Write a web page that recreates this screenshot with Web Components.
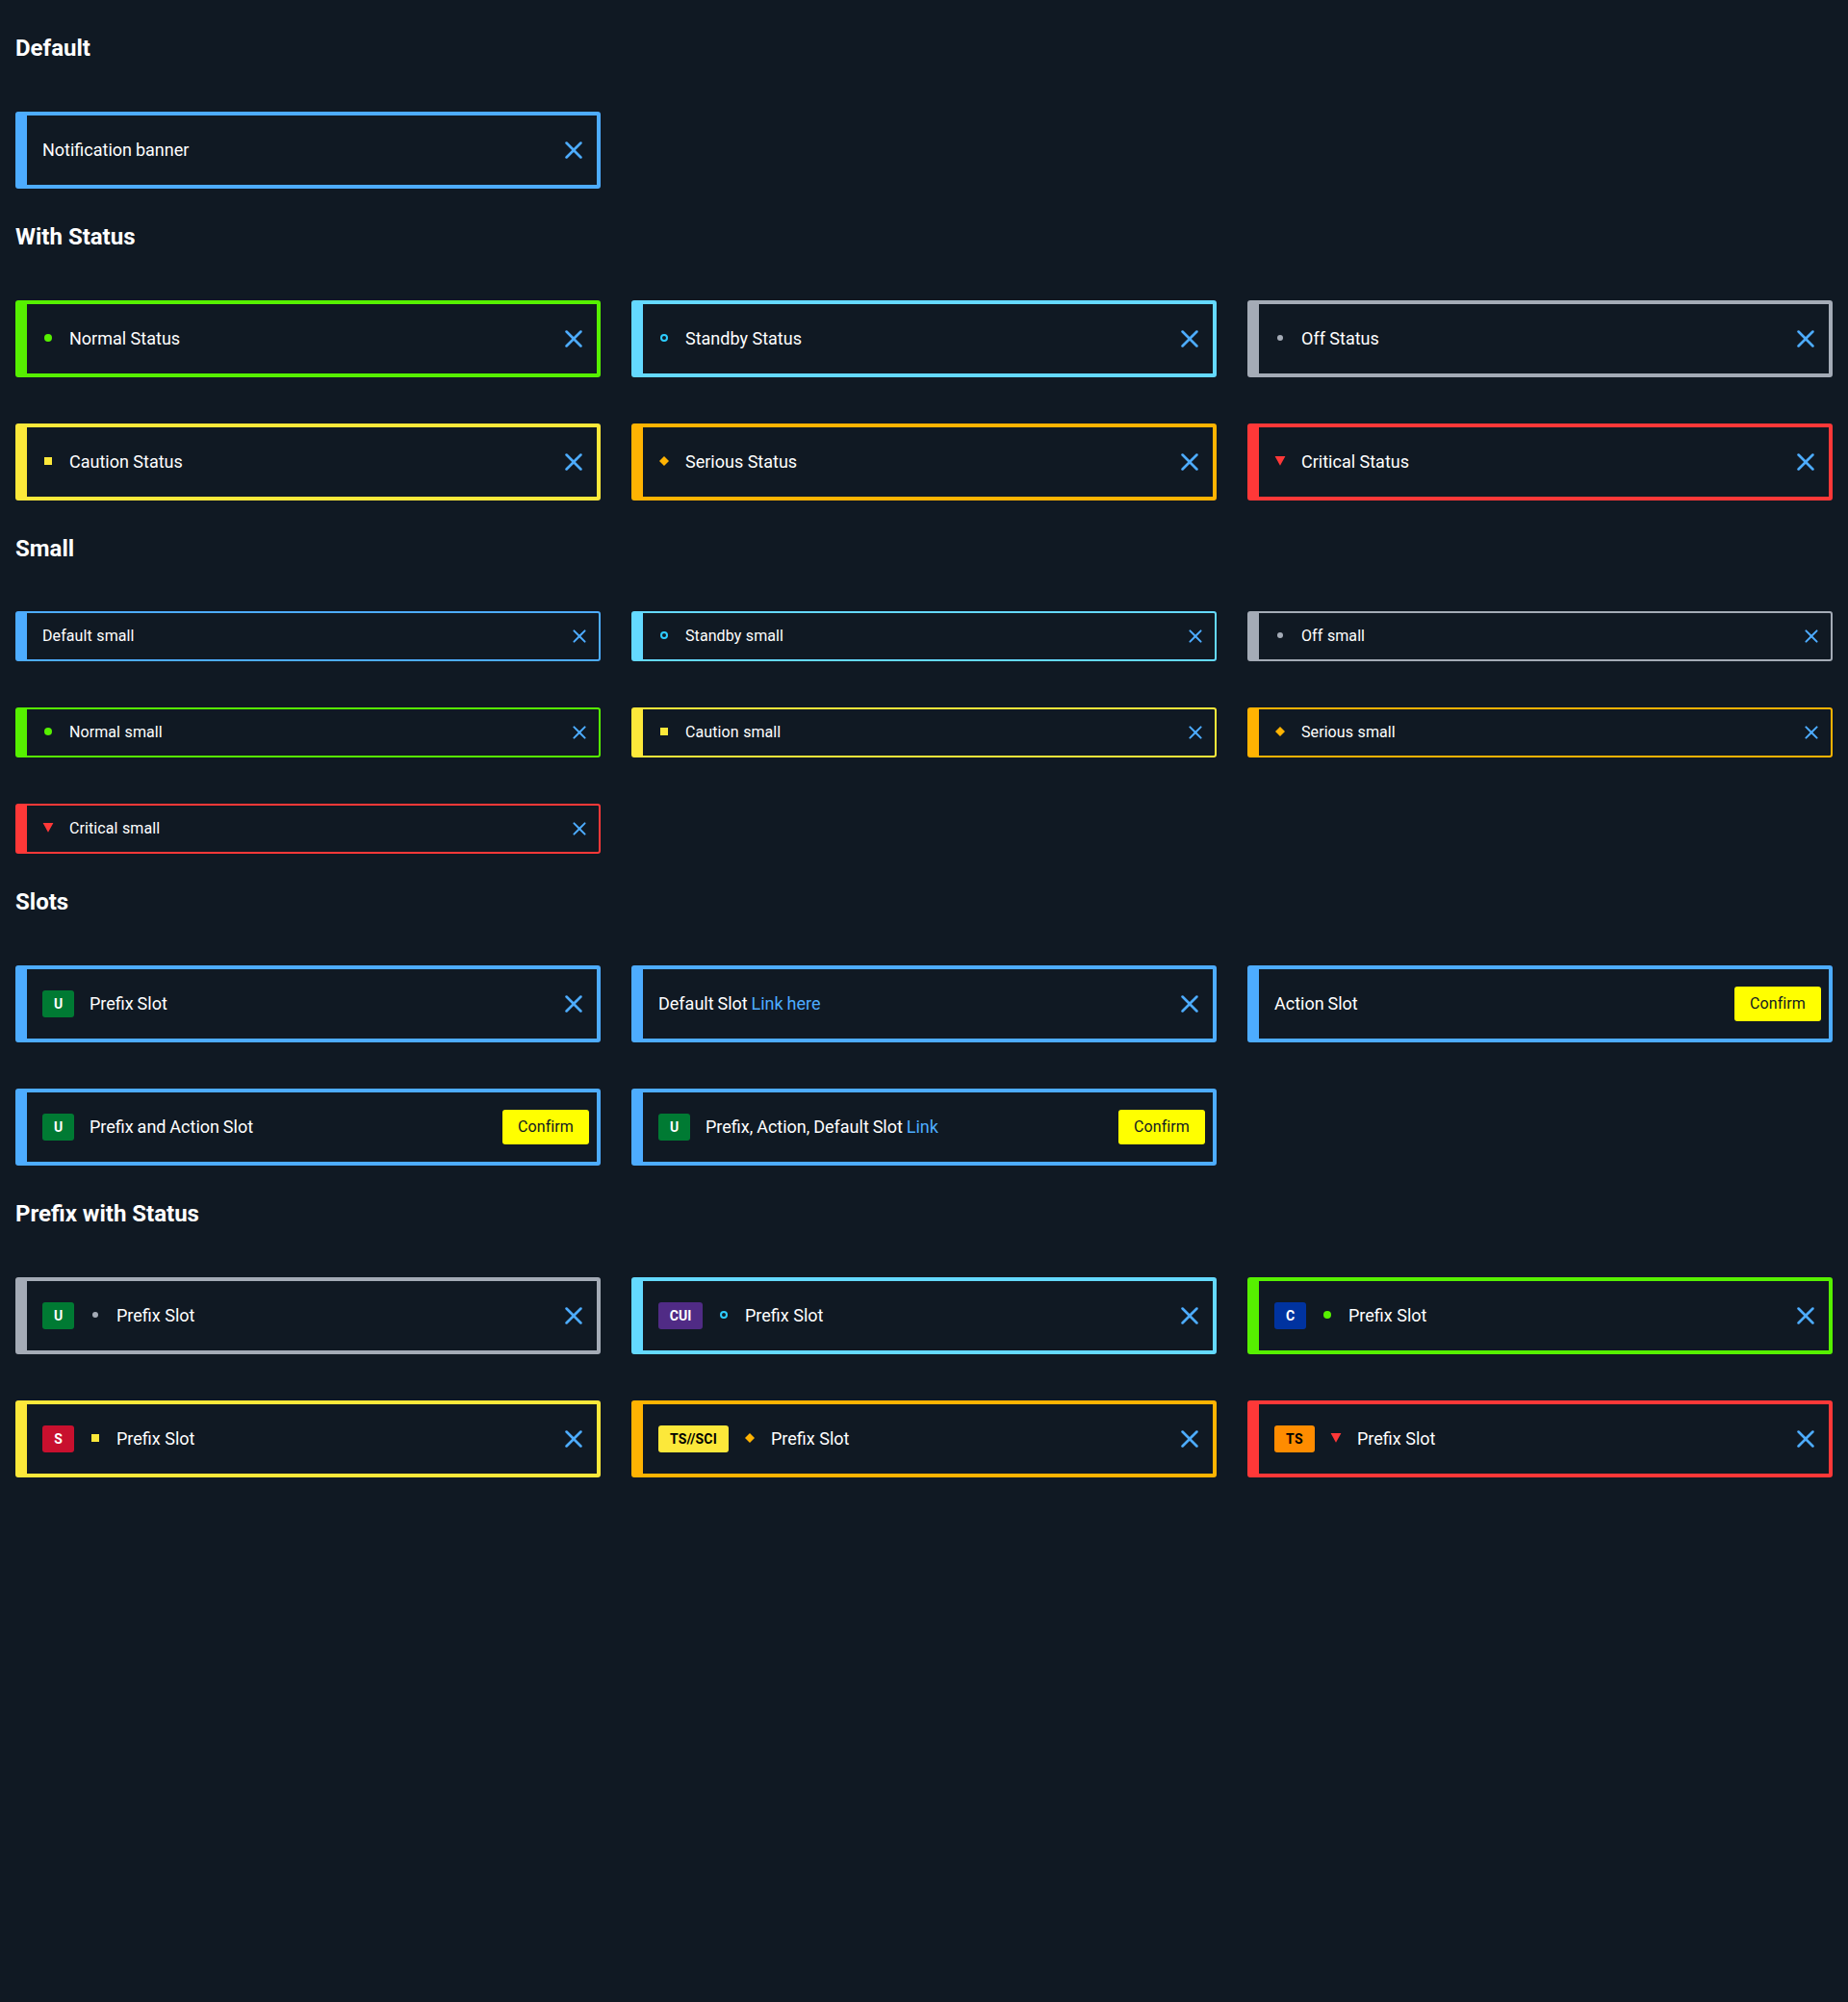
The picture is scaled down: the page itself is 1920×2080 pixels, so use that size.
<!DOCTYPE html>
<html lang="en">
<head>
<meta charset="utf-8">
<title>Notification banner</title>
<style>
body { margin: 0; background: #101923; color: #fff; font-family: Roboto, sans-serif; font-size: 16px; }
</style>
</head>
<body>
<demo-section heading="Default">
  <ui-notification>Notification banner</ui-notification>
</demo-section>
<demo-section heading="With Status">
  <ui-notification status="normal">Normal Status</ui-notification>
  <ui-notification status="standby">Standby Status</ui-notification>
  <ui-notification status="off">Off Status</ui-notification>
  <ui-notification status="caution">Caution Status</ui-notification>
  <ui-notification status="serious">Serious Status</ui-notification>
  <ui-notification status="critical">Critical Status</ui-notification>
</demo-section>
<demo-section heading="Small">
  <ui-notification small>Default small</ui-notification>
  <ui-notification small status="standby">Standby small</ui-notification>
  <ui-notification small status="off">Off small</ui-notification>
  <ui-notification small status="normal">Normal small</ui-notification>
  <ui-notification small status="caution">Caution small</ui-notification>
  <ui-notification small status="serious">Serious small</ui-notification>
  <ui-notification small status="critical">Critical small</ui-notification>
</demo-section>
<demo-section heading="Slots">
  <ui-notification><ui-tag slot="prefix" level="u">U</ui-tag>Prefix Slot</ui-notification>
  <ui-notification>Default Slot <ui-link>Link here</ui-link></ui-notification>
  <ui-notification>Action Slot<ui-button slot="actions">Confirm</ui-button></ui-notification>
  <ui-notification><ui-tag slot="prefix" level="u">U</ui-tag>Prefix and Action Slot<ui-button slot="actions">Confirm</ui-button></ui-notification>
  <ui-notification><ui-tag slot="prefix" level="u">U</ui-tag>Prefix, Action, Default Slot <ui-link>Link</ui-link><ui-button slot="actions">Confirm</ui-button></ui-notification>
</demo-section>
<demo-section heading="Prefix with Status">
  <ui-notification status="off"><ui-tag slot="prefix" level="u">U</ui-tag>Prefix Slot</ui-notification>
  <ui-notification status="standby"><ui-tag slot="prefix" level="cui">CUI</ui-tag>Prefix Slot</ui-notification>
  <ui-notification status="normal"><ui-tag slot="prefix" level="c">C</ui-tag>Prefix Slot</ui-notification>
  <ui-notification status="caution"><ui-tag slot="prefix" level="s">S</ui-tag>Prefix Slot</ui-notification>
  <ui-notification status="serious"><ui-tag slot="prefix" level="sci">TS//SCI</ui-tag>Prefix Slot</ui-notification>
  <ui-notification status="critical"><ui-tag slot="prefix" level="ts">TS</ui-tag>Prefix Slot</ui-notification>
</demo-section>
<script>
const STATUS_SHAPES = {
  off: '<circle cx="6" cy="6" r="3" fill="#a4abb6"/>',
  standby: '<circle cx="6" cy="6" r="3" fill="none" stroke="#2dccff" stroke-width="2"/>',
  normal: '<circle cx="6" cy="6" r="4" fill="#56f000"/>',
  caution: '<rect x="2" y="2" width="8" height="8" fill="#fce83a"/>',
  serious: '<path d="M6 1 11 6 6 11 1 6Z" fill="#ffb302"/>',
  critical: '<path d="M.6 1H11.4L6 10.8Z" fill="#ff3838"/>'
};
const CLOSE = '<path d="M18.3 5.71a.996.996 0 0 0-1.41 0L12 10.59 7.11 5.7A.996.996 0 1 0 5.7 7.11L10.59 12 5.7 16.89a.996.996 0 1 0 1.41 1.41L12 13.41l4.89 4.89a.996.996 0 1 0 1.41-1.41L13.41 12l4.89-4.89c.38-.38.38-1.02 0-1.4z" fill="currentColor"/>';

class DemoSection extends HTMLElement {
  connectedCallback() {
    const root = this.attachShadow({ mode: 'open' });
    root.innerHTML = `<style>
      :host { display: flex; flex-direction: column; padding: 16px 16px 0; }
      h2 { margin: 19.92px 0; font-size: 24px; font-weight: 700; line-height: 28px; }
      .grid { display: grid; grid-template-columns: repeat(3, 1fr); column-gap: 32px; row-gap: 48px; margin-top: 32px; }
    </style><h2></h2><div class="grid"><slot></slot></div>`;
    root.querySelector('h2').textContent = this.getAttribute('heading');
  }
}

class UiNotification extends HTMLElement {
  connectedCallback() {
    const root = this.attachShadow({ mode: 'open' });
    const shape = STATUS_SHAPES[this.getAttribute('status')];
    root.innerHTML = `<style>
      :host { --accent: #4dacff; display: flex; align-items: center; gap: 16px; box-sizing: border-box; height: 80px;
        padding: 0 8px 0 16px; border: 4px solid var(--accent); border-left-width: 12px; border-radius: 3px;
        font-size: 18px; line-height: 24px; word-spacing: -.6px; }
      :host([status]) { word-spacing: 0; }
      :host([status="standby"]) { --accent: #64d9ff; }
      :host([status="off"]) { --accent: #a4abb6; }
      :host([status="normal"]) { --accent: #56f000; }
      :host([status="caution"]) { --accent: #fce83a; }
      :host([status="serious"]) { --accent: #ffb302; }
      :host([status="critical"]) { --accent: #ff3838; }
      :host([small]) { height: 52px; border-width: 2px 2px 2px 12px; font-size: 16px; letter-spacing: .08px; word-spacing: .5px; }
      .status { flex: none; width: 12px; height: 12px; margin-bottom: 2px; }
      .message { flex: 1; }
      .close { display: block; width: 32px; height: 32px; color: #4dacff; }
      :host([small]) .close { width: 24px; height: 24px; }
    </style>
    <slot name="prefix"></slot>
    ${shape ? `<svg class="status" viewBox="0 0 12 12">${shape}</svg>` : ''}
    <div class="message"><slot></slot></div>
    <slot name="actions"><svg class="close" viewBox="0 0 24 24">${CLOSE}</svg></slot>`;
  }
}

class UiTag extends HTMLElement {
  connectedCallback() {
    this.attachShadow({ mode: 'open' }).innerHTML = `<style>
      :host { display: flex; flex: none; align-items: center; justify-content: center; box-sizing: border-box;
        width: 33px; height: 28px; border-radius: 3px; letter-spacing: 0;
        font-size: 14px; font-weight: 700; line-height: 20px; background: #007a33; color: #fff; }
      :host([level="cui"]) { width: 46px; background: #502b85; }
      :host([level="c"]) { background: #0033a0; }
      :host([level="s"]) { background: #c8102e; }
      :host([level="ts"]) { width: 42px; background: #ff8c00; color: #000; letter-spacing: .3px; }
      :host([level="sci"]) { width: 73px; background: #fce83a; color: #000; letter-spacing: .15px; }
    </style><slot></slot>`;
  }
}

class UiLink extends HTMLElement {
  connectedCallback() {
    this.attachShadow({ mode: 'open' }).innerHTML = `<style>:host { display: inline; color: #4dacff; }</style><slot></slot>`;
  }
}

class UiButton extends HTMLElement {
  connectedCallback() {
    this.attachShadow({ mode: 'open' }).innerHTML = `<style>
      :host { display: flex; }
      button { height: 36px; min-width: 90px; margin: 0; padding: 0 16px; border: 0; border-radius: 3px; background: #ff0; color: #101923;
        font: 400 16px/24px Roboto, sans-serif; letter-spacing: .08px; }
    </style><button type="button"><slot></slot></button>`;
  }
}

customElements.define('demo-section', DemoSection);
customElements.define('ui-notification', UiNotification);
customElements.define('ui-tag', UiTag);
customElements.define('ui-link', UiLink);
customElements.define('ui-button', UiButton);
</script>
</body>
</html>
